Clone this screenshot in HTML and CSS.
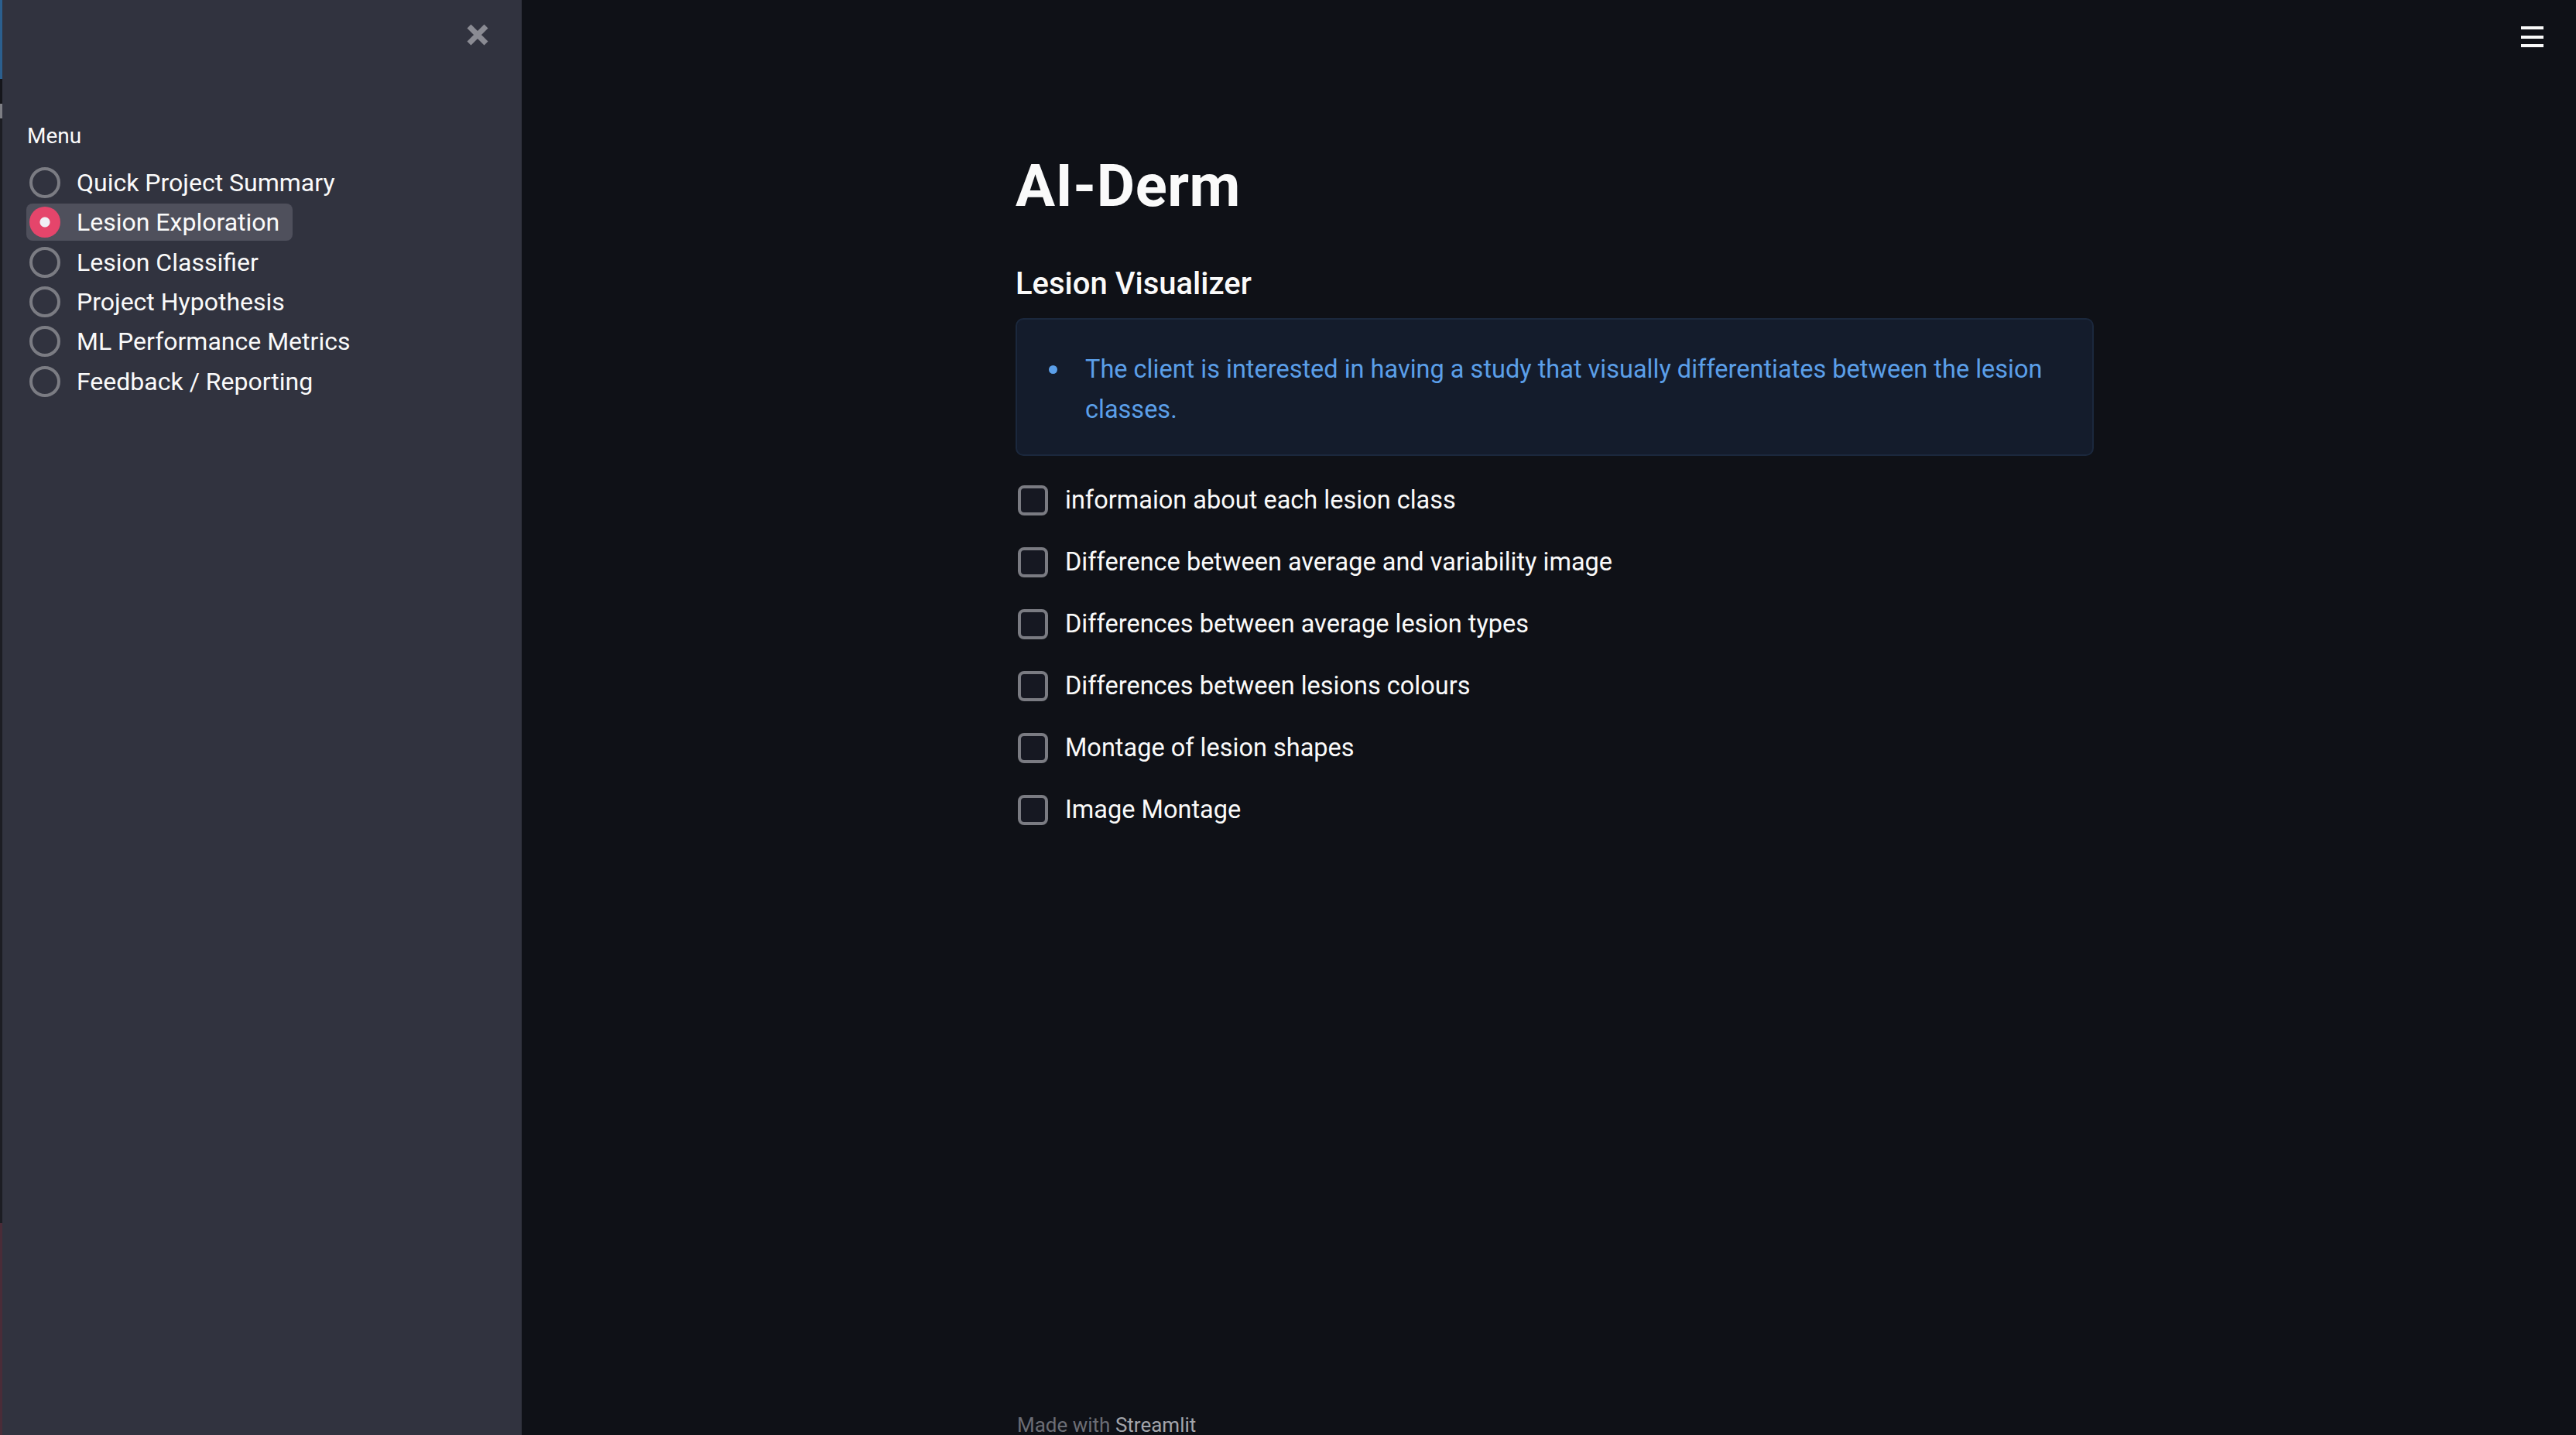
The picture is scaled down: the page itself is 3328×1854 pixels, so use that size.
FILE: index.html
```html
<!DOCTYPE html>
<html lang="en">
<head>
<meta charset="utf-8">
<title>AI-Derm</title>
<link rel="stylesheet" href="styles.css">
</head>
<body>
<div class="app">
  <aside class="sidebar">
    <div class="edge"></div>
    <div class="sidebar-inner">
      <div class="sidebar-head">
        <button class="close" aria-label="Close sidebar">
          <svg viewBox="0 0 30 30" width="30" height="30"><path d="M4 4 L26 26 M26 4 L4 26" stroke="#8a8b93" stroke-width="7" stroke-linecap="butt" fill="none"/></svg>
        </button>
      </div>
      <div class="menu-label">Menu</div>
      <div class="radios">
        <label class="radio"><span class="dot"></span><span class="rlabel">Quick Project Summary</span></label>
        <label class="radio selected"><span class="dot"></span><span class="rlabel">Lesion Exploration</span></label>
        <label class="radio"><span class="dot"></span><span class="rlabel">Lesion Classifier</span></label>
        <label class="radio"><span class="dot"></span><span class="rlabel">Project Hypothesis</span></label>
        <label class="radio"><span class="dot"></span><span class="rlabel">ML Performance Metrics</span></label>
        <label class="radio"><span class="dot"></span><span class="rlabel">Feedback / Reporting</span></label>
      </div>
    </div>
  </aside>
  <main class="main">
    <button class="hamburger" aria-label="Menu"><span></span><span></span><span></span></button>
    <div class="block">
      <h1 class="title">AI-Derm</h1>
      <h3 class="subheader">Lesion Visualizer</h3>
      <div class="info">
        <ul>
          <li>The client is interested in having a study that visually differentiates between the lesion classes.</li>
        </ul>
      </div>
      <div class="checks">
        <label class="check"><span class="box"></span><span class="clabel">informaion about each lesion class</span></label>
        <label class="check"><span class="box"></span><span class="clabel">Difference between average and variability image</span></label>
        <label class="check"><span class="box"></span><span class="clabel">Differences between average lesion types</span></label>
        <label class="check"><span class="box"></span><span class="clabel">Differences between lesions colours</span></label>
        <label class="check"><span class="box"></span><span class="clabel">Montage of lesion shapes</span></label>
        <label class="check"><span class="box"></span><span class="clabel">Image Montage</span></label>
      </div>
    </div>
    <footer class="footer">Made with <span class="brand">Streamlit</span></footer>
  </main>
</div>
</body>
</html>
```

FILE: styles.css
```css
* { box-sizing: border-box; }
html, body {
  margin: 0;
  padding: 0;
  height: 100%;
}
body {
  background: #0f1117;
  color: #fafafa;
  font-family: Roboto, "Liberation Sans", sans-serif;
  overflow: hidden;
}
.app {
  display: flex;
  height: 1854px;
}
.sidebar {
  width: 674px;
  flex: none;
  display: flex;
  background: #31333f;
}
.edge {
  width: 3px;
  flex: none;
  background: linear-gradient(to bottom,
    #2b5f8e 0, #2b5f8e 102px,
    #15161b 102px, #15161b 134px,
    #7d7e84 134px, #7d7e84 153px,
    #1c1d23 153px, #1c1d23 1580px,
    #4a2c38 1580px, #4a2c38 100%);
}
.sidebar-inner {
  flex: 1;
  display: flex;
  flex-direction: column;
  padding-left: 31px;
}
.sidebar-head {
  display: flex;
  justify-content: flex-end;
  height: 159px;
  padding-top: 30px;
  padding-right: 42px;
}
.close {
  width: 30px;
  height: 30px;
  padding: 0;
  border: 0;
  background: none;
}
.close svg { display: block; }
.menu-label {
  font-size: 28px;
  line-height: 1.2;
  margin-left: 1px;
  color: #fafafa;
}
.radios {
  display: flex;
  flex-direction: column;
  align-items: flex-start;
  gap: 3.3px;
  margin-top: 19.5px;
}
.radio {
  display: inline-flex;
  align-items: center;
  height: 48px;
  padding: 0 17px 0 4px;
  border-radius: 8px;
  font-size: 32px;
}
.radio.selected {
  background: #4f505c;
}
.dot {
  width: 40px;
  height: 40px;
  border-radius: 50%;
  border: 4px solid #7b7c83;
  flex: none;
  margin-right: 21px;
}
.selected .dot {
  border: 0;
  background: radial-gradient(circle, #f0f0f6 0, #f0f0f6 6px, #e5456b 7px);
}
.rlabel {
  color: #fafafa;
  line-height: 1;
}
.main {
  position: relative;
  flex: 1;
  display: flex;
  flex-direction: column;
  padding-left: 638px;
}
.hamburger {
  position: absolute;
  top: 34px;
  right: 42px;
  width: 29px;
  height: 27px;
  padding: 0;
  border: 0;
  background: none;
  display: flex;
  flex-direction: column;
  justify-content: space-between;
}
.hamburger span {
  display: block;
  height: 4px;
  background: #fafafa;
}
.block {
  width: 1393px;
  padding-top: 195px;
}
.title {
  margin: 0;
  font-size: 76px;
  font-weight: 700;
  line-height: 1.2;
  letter-spacing: 0.5px;
}
.subheader {
  margin: 57px 0 0;
  font-size: 40px;
  font-weight: 500;
  line-height: 1.2;
}
.info {
  margin-top: 20px;
  background: #141c2c;
  border: 2px solid #1b283d;
  border-radius: 10px;
  padding: 38px 40px 32px 37px;
  color: #5b9fe9;
  font-size: 32.5px;
  line-height: 52px;
}
.info ul {
  margin: 0;
  padding: 0;
  list-style: none;
}
.info li {
  position: relative;
  padding-left: 51px;
}
.info li::before {
  content: "";
  position: absolute;
  left: 4px;
  top: 21px;
  width: 11px;
  height: 11px;
  border-radius: 50%;
  background: #5b9fe9;
}
.checks {
  margin-top: 17px;
  display: flex;
  flex-direction: column;
}
.check {
  display: flex;
  align-items: center;
  height: 80px;
  font-size: 32.5px;
}
.box {
  width: 39px;
  height: 39px;
  margin-left: 3px;
  margin-right: 22px;
  border: 4px solid #7a7b82;
  border-radius: 8px;
  background: #161822;
  flex: none;
}
.clabel {
  line-height: 1;
}
.footer {
  margin-top: auto;
  font-size: 26px;
  line-height: 26px;
  color: #6b6d75;
  padding-left: 2px;
}
.brand {
  color: #a3a5ab;
}
```
